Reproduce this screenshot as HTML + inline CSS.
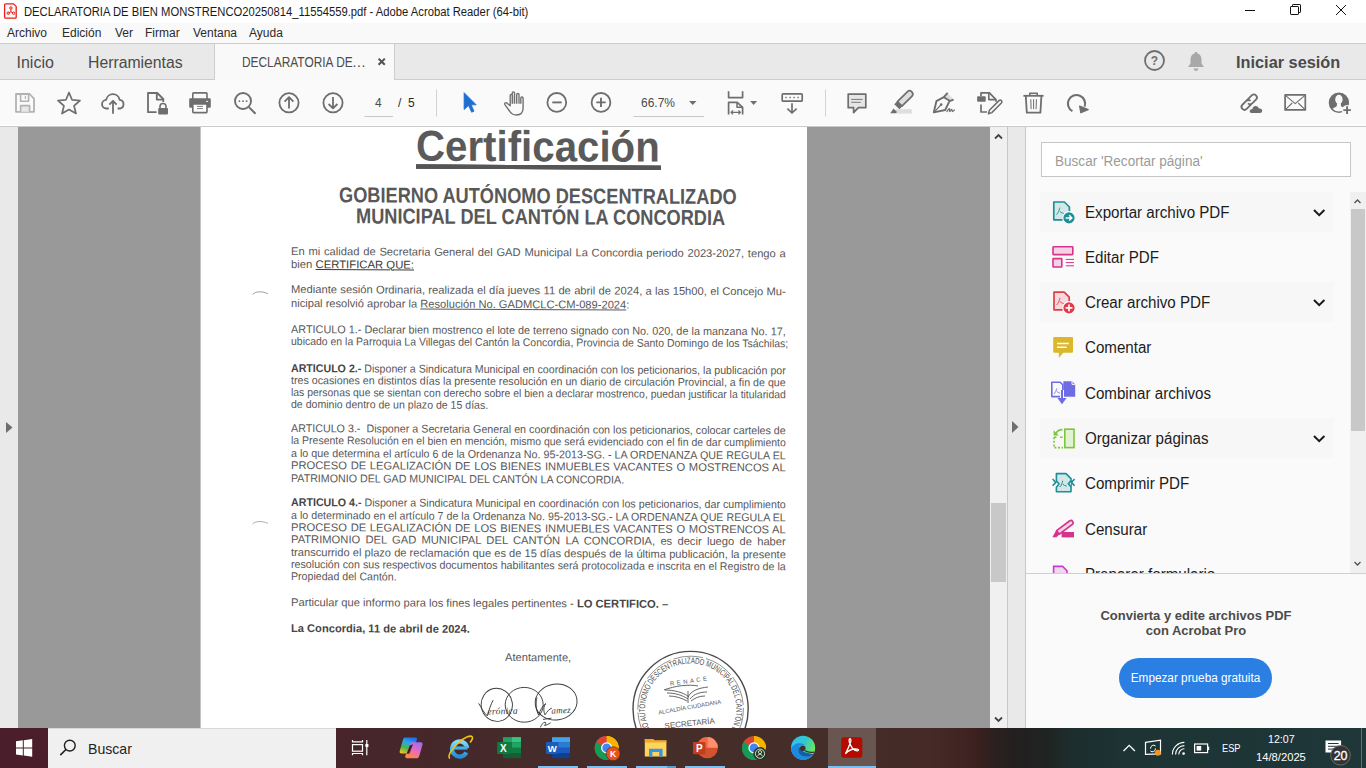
<!DOCTYPE html>
<html><head><meta charset="utf-8">
<style>
*{margin:0;padding:0;box-sizing:border-box}
html,body{width:1366px;height:768px;overflow:hidden;background:#fff;font-family:"Liberation Sans",sans-serif}
.a{position:absolute}
.t{position:absolute;white-space:nowrap}
#title{left:0;top:0;width:1366px;height:23px;background:#fff}
#menu{left:0;top:23px;width:1366px;height:21px;background:#f9f9f9;border-bottom:1px solid #cdcdcd}
#tabs{left:0;top:44px;width:1366px;height:36px;background:#e9e9e9;border-bottom:1px solid #cdcdcd}
#tb{left:0;top:80px;width:1366px;height:47px;background:#fafafa;border-bottom:1px solid #c9c9c9;box-shadow:inset 0 -1px 0 #fff}
#view{left:0;top:127px;width:1366px;height:601px;background:#999}
#taskbar{left:0;top:728px;width:1366px;height:40px;background:linear-gradient(90deg,#4a1e2a 0%,#47222a 20%,#452b2a 38%,#452e29 52%,#452d29 62%,#452a28 68%,#412422 70.5%,#3a201f 71.5%,#2c2020 72.8%,#221f1f 74.5%,#1f2422 76.5%,#1d2d2d 78.5%,#1d3334 82%,#1f3739 100%)}
.menuitem{font-size:12px;color:#2b2b2b;top:26px}
.tabtxt{font-size:16px;color:#4b4b4b}
svg{position:absolute;overflow:visible}
.doc{font-family:"Liberation Sans",sans-serif;color:#585858}
.doc b{color:#454545}
.doc .dk{color:#3a3a3a}
.doc u{text-decoration-thickness:1px;text-underline-offset:1px}
.ln{position:absolute;left:0;width:494.8px;font-size:11.2px;line-height:11.2px;height:11.2px;text-align:justify;text-align-last:justify;white-space:nowrap;transform-origin:0 0}
.ll{position:absolute;left:0;font-size:11.2px;line-height:11.2px;height:11.2px;white-space:nowrap;transform-origin:0 0}
.panelitem{position:absolute;left:1085px;font-size:16px;color:#1c1c1c;white-space:nowrap;transform:scaleX(0.945);transform-origin:0 0;margin-top:1px}
</style></head><body>
<!-- TITLE BAR -->
<div id="title" class="a"></div>
<svg style="left:3.5px;top:2.6px" width="14" height="16" viewBox="0 0 14 16"><path d="M1.6 0.8h8l2.6 2.6v10.8a1 1 0 0 1-1 1h-9.6a1 1 0 0 1-1-1v-12.4a1 1 0 0 1 1-1z" fill="#f8f8f8" stroke="#e8201a" stroke-width="1.3"/><circle cx="6.9" cy="5" r="1.2" fill="none" stroke="#e8201a" stroke-width="1"/><circle cx="4.2" cy="10.2" r="1.2" fill="none" stroke="#e8201a" stroke-width="1"/><circle cx="9.6" cy="10.2" r="1.2" fill="none" stroke="#e8201a" stroke-width="1"/><path d="M6.9 6.2v2.6l-2.2 1.2M6.9 8.8l2.2 1.2" fill="none" stroke="#e8201a" stroke-width="1"/></svg>
<div class="t" id="wtitle" style="left:23.5px;top:5px;font-size:12px;color:#1a1a1a;transform:scaleX(0.937);transform-origin:0 0">DECLARATORIA DE BIEN MONSTRENCO20250814_11554559.pdf - Adobe Acrobat Reader (64-bit)</div>
<svg style="left:0;top:0" width="1366" height="23" viewBox="0 0 1366 23"><g fill="none" stroke="#111" stroke-width="1">
<path d="M1245 10.5h10"/>
<rect x="1290.5" y="6.5" width="8" height="8" rx="0.6"/>
<path d="M1292.5 6.5v-1.4a.6 .6 0 0 1 .6-.6h6.8a.6 .6 0 0 1 .6 .6v6.8a.6 .6 0 0 1-.6 .6h-1.4"/>
<path d="M1336 5l10 10M1346 5l-10 10"/>
</g></svg>
<!-- MENU -->
<div id="menu" class="a"></div>
<div class="t menuitem" style="left:7px">Archivo</div>
<div class="t menuitem" style="left:62px">Edición</div>
<div class="t menuitem" style="left:115px">Ver</div>
<div class="t menuitem" style="left:145px">Firmar</div>
<div class="t menuitem" style="left:193px">Ventana</div>
<div class="t menuitem" style="left:249px">Ayuda</div>

<!-- TABS -->
<div id="tabs" class="a"></div>
<div class="a" style="left:214px;top:44px;width:181px;height:36px;background:#f9f9f9;border-left:1px solid #cdcdcd;border-right:1px solid #cdcdcd"></div>
<div class="t tabtxt" style="left:16.5px;top:54px">Inicio</div>
<div class="t tabtxt" style="left:87.5px;top:54px;transform:scaleX(0.985);transform-origin:0 0">Herramientas</div>
<div class="t" id="tabt" style="left:241.5px;top:54px;font-size:14px;color:#4b4b4b;transform:scaleX(0.85);transform-origin:0 0">DECLARATORIA DE</div><div class="t" style="left:352.5px;top:54px;font-size:14px;color:#4b4b4b;letter-spacing:0.6px">...</div>
<svg style="left:378px;top:58px" width="8" height="8" viewBox="0 0 8 8"><path d="M0.6 0.6L6.8 6.8M6.8 0.6L0.6 6.8" stroke="#505050" stroke-width="2"/></svg>
<!-- right of tabs -->
<svg style="left:1144px;top:50px" width="21" height="21" viewBox="0 0 21 21"><circle cx="10.5" cy="10.5" r="9.5" fill="none" stroke="#6e6e6e" stroke-width="1.8"/><text x="10.5" y="15" font-family="Liberation Sans" font-weight="bold" font-size="12" text-anchor="middle" fill="#6e6e6e">?</text></svg>
<svg style="left:1187px;top:51px" width="18" height="21" viewBox="0 0 18 21"><path d="M9 1c-1 0-1.5.7-1.5 1.5C4.8 3.3 3.5 5.5 3.5 8.5v4L1 16h16l-2.5-3.5v-4c0-3-1.3-5.2-4-6C10.5 1.700 10 1 9 1z" fill="#a8a8a8"/><path d="M6.5 17.5h5a2.5 2.5 0 0 1-5 0z" fill="#a8a8a8"/></svg>
<div class="t" style="left:1236px;top:54px;font-size:16px;font-weight:bold;color:#4b4b4b;transform:scaleX(1.02);transform-origin:0 0">Iniciar sesión</div>

<!-- TOOLBAR -->
<div id="tb" class="a"></div>
<svg style="left:0;top:0" width="1366" height="130" viewBox="0 0 1366 130">
<g fill="none" stroke="#6e6e6e" stroke-width="1.8" stroke-linejoin="round">
<!-- save (disabled) -->
<g stroke="#b2b2b2">
<path d="M16 94h13.6l4.4 4.6v13.2h-18z" stroke-width="1.8"/>
<path d="M20.6 94v7.3h8v-7.3" stroke-width="1.6"/>
<path d="M25.4 96v3" stroke-width="1.1"/>
<path d="M20.6 111.8v-6.2h9v6.2" fill="#e8e8e8" stroke-width="1.6"/>
</g>
<!-- star -->
<path d="M69 92.5L72 99.8L80 100.5L74 105.8L76 113.5L69 109.5L62 113.5L64 105.8L58 100.5L66 99.8z" stroke-width="1.7"/>
<!-- cloud upload -->
<path d="M108.8 108.5h-2.3a4.3 4.3 0 0 1-.3-8.6a6.8 6.8 0 0 1 13.4-.1a4.4 4.4 0 0 1 .3 8.7h-2.3" stroke-width="1.8"/>
<path d="M113 113.8v-13M109.4 104.6l3.6-3.8l3.6 3.8" stroke-width="1.8"/>
<!-- file lock -->
<path d="M156.6 112.2h-8.6v-19.2h9.3l6 6v3" stroke-width="1.8"/>
<path d="M156.8 93v6.6h6.6" stroke-width="1.8"/>
<path d="M160 108.5v-2a3 3 0 0 1 6 0v2" stroke-width="1.6"/>
<rect x="158.2" y="108" width="9.8" height="6.6" rx="1" fill="#6e6e6e" stroke="none"/>
<!-- printer -->
<rect x="192.8" y="92.9" width="14.2" height="7" rx="0.8" stroke-width="1.6"/>
<rect x="189.2" y="98.2" width="21.6" height="9.6" rx="1.2" fill="#6e6e6e" stroke="none"/>
<rect x="192.8" y="104" width="14.2" height="8.6" rx="0.8" fill="#fff" stroke-width="1.6"/>
<path d="M197 106.4h6M197 108.6h6" stroke-width="0.9"/>
<path d="M206 101.4h2" stroke="#fff" stroke-width="0.9"/>
<!-- zoom search -->
<circle cx="243" cy="101" r="8" stroke-width="1.9"/>
<path d="M248.9 107.1l6.6 6.6" stroke-width="2"/>
<g fill="#6e6e6e" stroke="none"><circle cx="239.4" cy="101.2" r="0.9"/><circle cx="243" cy="101.2" r="0.9"/><circle cx="246.6" cy="101.2" r="0.9"/></g>
<!-- up -->
<circle cx="289" cy="102.8" r="9.6" stroke-width="1.8"/>
<path d="M289 108.5v-11.5M284.6 101.6l4.4-4.4l4.4 4.4" stroke-width="1.8"/>
<!-- down -->
<circle cx="333" cy="102.8" r="9.6" stroke-width="1.8"/>
<path d="M333 97v11.5M328.6 104l4.4 4.4l4.4-4.4" stroke-width="1.8"/>
<!-- page input underline -->
<path d="M364.7 116.5h28.3" stroke="#c8c8c8" stroke-width="1"/>
<!-- separator -->
<path d="M436.5 89.5v27" stroke="#d2d2d2" stroke-width="1"/>
<!-- hand -->
<path d="M520.8 103.8V98.2a1.15 1.15 0 0 1 2.3 0V107.8c0 4.6-2.8 7.2-6.8 7.2c-3.2 0-5.2-1.4-6.8-4l-4.6-6.4c-.8-1.2.6-2.6 1.9-1.7l3.4 2.8V95.6a1.15 1.15 0 0 1 2.3 0V103.8M512.25 103.8V93a1.15 1.15 0 0 1 2.3 0V103.8M516.7 103.8V94.6a1.15 1.15 0 0 1 2.3 0V103.8" stroke-width="1.35"/>
<!-- zoom out -->
<circle cx="556.8" cy="102.4" r="9.4" stroke-width="1.8"/>
<path d="M552.3 102.4h9.4" stroke-width="1.9"/>
<!-- zoom in -->
<circle cx="601" cy="102.4" r="9.4" stroke-width="1.8"/>
<path d="M596.3 102.4h9.4M601 97.7v9.4" stroke-width="1.9"/>
<!-- zoom underline -->
<path d="M633.5 116.5h70.5" stroke="#c8c8c8" stroke-width="1"/>
<path d="M689 101h7.5l-3.75 4z" fill="#6e6e6e" stroke="none"/>
<!-- fit page -->
<path d="M728.6 91.2v6.4h14v-6.4" stroke-width="1.7"/>
<path d="M728.6 114.6v-12.2h8.6l5.4 5v7.2" stroke-width="1.7"/>
<path d="M737 102.6v4.6h5.4" stroke-width="1.5"/>
<path d="M731 112.4h9.4M733 110.4l-2 2l2 2M738.4 110.4l2 2l-2 2" stroke-width="1.3"/>
<path d="M750.1 101h7l-3.5 4z" fill="#6e6e6e" stroke="none"/>
<!-- measure -->
<rect x="782.2" y="93.8" width="20" height="7.4" rx="1" stroke-width="1.7"/>
<g fill="#6e6e6e" stroke="none"><rect x="785.3" y="96.8" width="1.4" height="1.4"/><rect x="789.4" y="96.8" width="1.4" height="1.4"/><rect x="793.4" y="96.8" width="1.4" height="1.4"/><rect x="797.4" y="96.8" width="1.4" height="1.4"/></g>
<path d="M792 103.3v9.6M787.4 108.6l4.6 4.4l4.6-4.4" stroke-width="1.7"/>
<!-- separator -->
<path d="M825.5 89.5v27" stroke="#d2d2d2" stroke-width="1"/>
<!-- comment -->
<path d="M848.2 94.1h17.6v13.6h-7.4l-4.8 5v-5h-5.4z" fill="#e6e6e6" stroke-width="1.7"/>
<path d="M851.2 99.4h11.5M851.2 102.3h9.6" stroke-width="0.9"/>
<!-- highlighter -->
<rect x="896" y="109.2" width="15.8" height="4.4" fill="#dedede" stroke="none"/>
<g transform="translate(902.2 101.4) rotate(-45)">
<path d="M-3.6 -3.2H10.4a3.2 3.2 0 0 1 0 6.4H-3.6z" fill="#dedede" stroke-width="1.7"/>
<rect x="-7.6" y="-3.6" width="4.6" height="7.2" fill="#6e6e6e" stroke="none"/>
</g>
<path d="M890.2 113.2l3.4-4.6l3.4 3.4l-1.2 1.2z" fill="#6e6e6e" stroke="none"/>
<!-- pen sign -->
<path d="M947.4 93l6.2 6.4l-4 1.6l-5.8-3.8z" fill="#dedede" stroke="none"/>
<path d="M947.6 92.8l-3.8 4.4M953.6 99.6l-4.2 1.6" stroke-width="1.9"/>
<path d="M943.8 97.2l-7.4 4l-2.6 11.2l11.4-2.4l4.4-9.2z" stroke-width="1.9"/>
<path d="M934.4 111.8l6.4-6.8" stroke-width="1.1"/>
<circle cx="941.2" cy="104.6" r="1.3" fill="#6e6e6e" stroke="none"/>
<path d="M946.6 112c1.2-1.8 2.2-3.4 2.8-3.4c.6 0-.4 3 .4 3c.6 0 1.2-2.2 1.9-2.2c.6 0 .2 2.2.8 2.2c.5 0 1.4-1.2 2.2-1.8" stroke-width="1.2"/>
<!-- edit doc -->
<path d="M981 96v-3.2h8.4l6.6 6.8v2.2" stroke-width="1.7"/>
<path d="M988.8 92.8v6.8h7.2" stroke-width="1.6"/>
<path d="M981 104.4v7.6h6" stroke-width="1.7"/>
<rect x="977.1" y="96.2" width="8.6" height="5.6" rx="1" fill="#6e6e6e" stroke="none"/>
<path d="M988.4 113.8l1-3.6l9.6-9.6a1.6 1.6 0 0 1 2.4 2.4l-9.6 9.6z" stroke-width="1.5"/>
<!-- trash -->
<path d="M1023.4 95.8h20.2" stroke-width="1.8"/>
<path d="M1029.8 95.4v-2.2h7.4v2.2" stroke-width="1.6"/>
<path d="M1025.8 96l1 16.6h13.6l1-16.6" stroke-width="1.8"/>
<path d="M1030.8 99.2l.3 10M1033.6 99.2v10M1036.4 99.2l-.3 10" stroke-width="1"/>
<!-- rotate -->
<path d="M1072.4 111.2a8.6 8.6 0 1 1 12.2-4.6" stroke-width="2.1"/>
<path d="M1079.6 106l8.6 3.6l-7.4 3.2z" fill="#6e6e6e" stroke="#6e6e6e" stroke-width="1.2"/>
<!-- link cloud -->
<g transform="translate(1249.2 102.2) rotate(-45)">
<path d="M-0.2 -3H6.6A3 3 0 0 1 6.6 3H1.2A3 3 0 0 1 -1.8 0" stroke-width="1.8" stroke-linecap="butt"/>
<path d="M0.2 3H-6.6A3 3 0 0 1 -6.6 -3H-1.2A3 3 0 0 1 1.8 0" stroke-width="1.8" stroke-linecap="butt"/>
</g>
<path d="M1251.4 113.8a2.6 2.6 0 0 1 .3-5.2a4 4 0 0 1 7.6-.8a3 3 0 0 1 3.6 3a3 3 0 0 1-3 3z" fill="#6e6e6e" stroke="#f9f9f9" stroke-width="1.4"/>
<!-- mail -->
<rect x="1285.1" y="94.9" width="20.2" height="15" stroke-width="1.7"/>
<path d="M1285.4 95.4l9.8 8.2l9.8-8.2M1285.4 109.6l6.8-6.6M1305 109.6l-6.8-6.6" stroke-width="1.1"/>
<!-- person add -->
<circle cx="1338.9" cy="102.8" r="10.2" fill="#6e6e6e" stroke="none"/>
<ellipse cx="1338.9" cy="99.5" rx="3.7" ry="4.7" fill="#f9f9f9" stroke="none"/>
<path d="M1336.9 103.4v1.8c0 .8-.5 1.4-1.4 1.8l-3 1.7A8.7 8.7 0 0 0 1345.3 108.7l-3-1.7c-.9-.4-1.4-1-1.4-1.8v-2z" fill="#f9f9f9" stroke="none"/>
<circle cx="1347.1" cy="110.1" r="5.2" fill="#f9f9f9" stroke="none"/>
<path d="M1347.1 106.3v7.6M1343.3 110.1h7.6" stroke="#6e6e6e" stroke-width="1.9"/>
</g>
</svg>


<div class="t" style="left:375px;top:96px;font-size:12px;color:#4b4b4b">4</div>
<div class="t" style="left:398px;top:96px;font-size:12px;color:#2b2b2b">/&nbsp; 5</div>
<div class="t" style="left:641px;top:96px;font-size:12px;color:#4b4b4b">66.7%</div>
<svg style="left:0;top:0" width="500" height="130"><path d="M464.1 92.7L464.1 109.5L468.6 105.6L471.6 112.2L474 111.2L471.2 104.8L476.2 104.8z" fill="#1d6fd2" stroke="#1d6fd2" stroke-width="0.8" stroke-linejoin="round"/></svg>
<!-- VIEW -->
<div id="view" class="a"></div>
<div class="a" style="left:0;top:127px;width:18px;height:601px;background:#e9e9e9"></div>
<svg style="left:6px;top:422px" width="7" height="11" viewBox="0 0 7 11"><path d="M0 0L6.5 5.5L0 11z" fill="#6e6e6e"/></svg>
<!-- page -->
<div class="a" id="page" style="left:200px;top:127px;width:607px;height:601px;background:#fff;overflow:hidden;border-left:1px solid #c4c4c4">
<svg style="left:-1px;top:-127px" width="607" height="860" viewBox="200 0 607 860">
<g fill="none" stroke="#555" stroke-width="0.9">
<path d="M252.5 294.5c3-3.2 9-3.6 15.5-.8" stroke="#888" stroke-width="0.8"/>
<path d="M252.5 524c3-3 9-3.4 15.5-.6" stroke="#999" stroke-width="0.8"/>
</g>
<g fill="none" stroke="#3a3a3a" stroke-width="0.95">
<ellipse cx="496.8" cy="704.8" rx="15.6" ry="16.6" transform="rotate(-10 496.8 704.8)"/>
<ellipse cx="524.2" cy="704.8" rx="19" ry="17.4"/>
<ellipse cx="556.1" cy="702" rx="21" ry="18" transform="rotate(-8 556.1 702)"/>
<path d="M478.7 703.4c2.2 3.6 5 9.4 8.6 12.4c1.6-5 3.4-11.4 5.8-15.6"/>
<path d="M537 697.6c-1.6 5-1 12.6 1.6 17.4c1.6-4.6 3.6-9.4 7.4-11.4c-3 2-2.4 8.8-1 11.2c2-3.2 4.4-6 6.8-6.6"/>
<path d="M540.4 727.4c1-2.6 2.6-5 4.6-5.2c1.6 0 .6 2.4-.6 3.2c2 0 4.2-1.4 6.2-2.6M543 719.4l8.4-1.2"/>
</g>
<text x="487.5" y="714.6" font-family="Liberation Serif" font-style="italic" font-size="9.5" fill="#3a3a3a" letter-spacing="0.2" transform="rotate(-2 487.5 714.6)">erónica</text>
<text x="551.5" y="713.8" font-family="Liberation Serif" font-style="italic" font-size="9" fill="#3a3a3a" letter-spacing="0.3" transform="rotate(-3 551.5 713.8)">amez</text>
<defs>
<path id="sr1" d="M690.6 765.5a47.5 47.5 0 1 1 0.01 0"/><path id="sr0" d="M690.6 754.6a45.6 45.6 0 1 1 0.01 0"/>
</defs>
<g fill="none" stroke="#4a4a4a">
<circle cx="690.6" cy="709" r="57.6" stroke-width="1.4"/>
<circle cx="690.6" cy="709" r="52.8" stroke-width="0.6" stroke-dasharray="30 3"/>
</g>
<text font-family="Liberation Sans" font-size="8.4" fill="#4a4a4a"><textPath href="#sr0" startOffset="9%" textLength="252" lengthAdjust="spacingAndGlyphs">GOBIERNO AUTÓNOMO DESCENTRALIZADO MUNICIPAL DEL CANTÓN LA CONCORDIA</textPath></text>
<text x="690" y="683" font-family="Liberation Sans" font-size="6" fill="#555" text-anchor="middle" letter-spacing="2.5" transform="rotate(-8 690 683)">RENACE</text>
<g fill="none" stroke="#555" stroke-width="0.9">
<path d="M664 690c10-4 25-6 34-4"/>
<path d="M665 690c8 0 18 2 24 7M667 693c8 0 15 2 21 6M669 696c6 0 13 2 18 5M688 697c3-6 10-9 20-10M690 699c4-5 10-7 17-7M691 701c4-3 8-5 14-5M688 703v-12"/>
</g>
<text x="690" y="709" font-family="Liberation Sans" font-size="5.8" fill="#555" text-anchor="middle" transform="rotate(-10 690 709)">ALCALDÍA CIUDADANA</text>
<text x="690" y="726" font-family="Liberation Sans" font-size="8" fill="#555" text-anchor="middle" transform="rotate(-6 690 726)">SECRETARÍA</text>
</svg>
<div class="a doc" id="doc" style="left:90.2px;top:-127px;width:600px;height:800px;transform:skewY(0.27deg);transform-origin:0 255px">
<div class="ln" style="top:246.12px">En mi calidad de Secretaria General del GAD Municipal La Concordia periodo 2023-2027, tengo a</div>
<div class="ll" style="top:258.62px;transform:scaleX(1.0110)">bien <u class="dk">CERTIFICAR QUE:</u></div>
<div class="ln" style="top:284.42px">Mediante sesión Ordinaria, realizada el día jueves 11 de abril de 2024, a las 15h00, el Concejo Mu-</div>
<div class="ll" style="top:297.62px;transform:scaleX(0.9946)">nicipal resolvió aprobar la <u>Resolución No. GADMCLC-CM-089-2024</u>:</div>
<div class="ln" style="top:323.62px;width:509.6px;transform:scaleX(0.9709)">ARTICULO 1.- Declarar bien mostrenco el lote de terreno signado con No. 020, de la manzana No. 17,</div>
<div class="ll" style="top:336.42px;transform:scaleX(0.9347)">ubicado en la Parroquia La Villegas del Cantón la Concordia, Provincia de Santo Domingo de los Tsáchilas;</div>
<div class="ln" style="top:362.52px;width:521.0px;transform:scaleX(0.9497)"><b>ARTICULO 2.-</b> Disponer a Sindicatura Municipal en coordinación con los peticionarios, la publicación por</div>
<div class="ln" style="top:375.02px;width:518.5px;transform:scaleX(0.9542)">tres ocasiones en distintos días la presente resolución en un diario de circulación Provincial, a fin de que</div>
<div class="ln" style="top:387.32px;width:531.0px;transform:scaleX(0.9319)">las personas que se sientan con derecho sobre el bien a declarar mostrenco, puedan justificar la titularidad</div>
<div class="ll" style="top:398.72px;transform:scaleX(0.9435)">de dominio dentro de un plazo de 15 días.</div>
<div class="ln" style="top:423.22px;width:517.0px;transform:scaleX(0.9570)">ARTICULO 3.-&nbsp; Disponer a Secretaria General en coordinación con los peticionarios, colocar carteles de</div>
<div class="ln" style="top:435.42px;width:528.5px;transform:scaleX(0.9363)">la Presente Resolución en el bien en mención, mismo que será evidenciado con el fin de dar cumplimiento</div>
<div class="ln" style="top:447.62px;width:516.0px;transform:scaleX(0.9589)">a lo que determina el artículo 6 de la Ordenanza No. 95-2013-SG. - LA ORDENANZA QUE REGULA EL</div>
<div class="ln" style="top:460.12px">PROCESO DE LEGALIZACIÓN DE LOS BIENES INMUEBLES VACANTES O MOSTRENCOS AL</div>
<div class="ll" style="top:472.62px;transform:scaleX(0.9535)">PATRIMONIO DEL GAD MUNICIPAL DEL CANTÓN LA CONCORDIA.</div>
<div class="ln" style="top:497.32px;width:519.1px;transform:scaleX(0.9532)"><b>ARTICULO 4.-</b> Disponer a Sindicatura Municipal en coordinación con los peticionarios, dar cumplimiento</div>
<div class="ln" style="top:509.62px;width:519.1px;transform:scaleX(0.9531)">a lo determinado en el artículo 7 de la Ordenanza No. 95-2013-SG.- LA ORDENANZA QUE REGULA EL</div>
<div class="ln" style="top:522.32px">PROCESO DE LEGALIZACIÓN DE LOS BIENES INMUEBLES VACANTES O MOSTRENCOS AL</div>
<div class="ln" style="top:534.12px">PATRIMONIO DEL GAD MUNICIPAL DEL CANTÓN LA CONCORDIA, es decir luego de haber</div>
<div class="ln" style="top:546.52px;width:498.7px;transform:scaleX(0.9923)">transcurrido el plazo de reclamación que es de 15 días después de la última publicación, la presente</div>
<div class="ln" style="top:558.72px;width:518.5px;transform:scaleX(0.9543)">resolución con sus respectivos documentos habilitantes será protocolizada e inscrita en el Registro de la</div>
<div class="ll" style="top:570.52px;transform:scaleX(0.9484)">Propiedad del Cantón.</div>
<div class="ll" style="top:596.82px;transform:scaleX(0.9994)">Particular que informo para los fines legales pertinentes - <b>LO CERTIFICO. –</b></div>
<div class="ll" style="top:623.02px;transform:scaleX(0.9950)"><b>La Concordia, 11 de abril de 2024.</b></div>
<div class="ll" style="top:124.20px;left:125.4px;font-size:43px;line-height:43px;height:43px;font-weight:bold;color:#5a5a5a;transform:scaleX(0.9360)">Certificación</div>
<div class="ll" style="top:184.58px;left:48.1px;font-size:21.4px;line-height:21.4px;height:21.4px;font-weight:bold;color:#585858;transform:scaleX(0.8508)">GOBIERNO AUTÓNOMO DESCENTRALIZADO</div>
<div class="ll" style="top:206.18px;left:64.8px;font-size:21.4px;line-height:21.4px;height:21.4px;font-weight:bold;color:#585858;transform:scaleX(0.8504)">MUNICIPAL DEL CANTÓN LA CONCORDIA</div>
<div class="ll" style="top:650.82px;left:213.9px;font-size:11.2px;line-height:11.2px;height:11.2px;;transform:scaleX(0.9948)">Atentamente,</div>
<div class="a" style="left:124.8px;top:164.2px;width:245px;height:4px;background:#5a5a5a"></div>

<div class="a" style="left:124.8px;top:164.2px;width:245px;height:4px;background:#5a5a5a"></div>

<div class="a" style="left:124.8px;top:164.2px;width:245px;height:3.8px;background:#555"></div>

<div class="a" style="left:124.8px;top:164.2px;width:245px;height:3.8px;background:#555"></div>

</div>
</div>
<!-- scrollbar -->
<div class="a" style="left:990px;top:127px;width:18px;height:601px;background:#f0f0f0;border-right:1px solid #c8c8c8"></div>
<div class="a" style="left:991px;top:503px;width:15px;height:79px;background:#c8c8c8"></div>
<div class="a" style="left:1008px;top:127px;width:18px;height:601px;background:#e9e9e9;border-right:1px solid #c8c8c8"></div>
<svg style="left:1012px;top:421px" width="7" height="12" viewBox="0 0 7 12"><path d="M0 0L6.5 6L0 12z" fill="#6e6e6e"/></svg>
<!-- right panel -->
<div class="a" id="rpanel" style="left:1026px;top:127px;width:340px;height:601px;background:#fafafa"></div>
<div class="a" style="left:1041px;top:142px;width:310px;height:35px;background:#fff;border:1px solid #c6c6c6"></div>
<div class="t" id="srch" style="left:1055px;top:153px;font-size:14px;color:#9b9b9b;transform:scaleX(0.968);transform-origin:0 0">Buscar 'Recortar página'</div>
<div class="a" style="left:1040px;top:192px;width:294px;height:40px;background:#f7f7f7"></div>
<div class="a" style="left:1040px;top:282px;width:294px;height:40px;background:#f7f7f7"></div>
<div class="a" style="left:1040px;top:418px;width:294px;height:40px;background:#f7f7f7"></div>
<div class="a" style="left:1026px;top:192px;width:340px;height:381px;overflow:hidden">
<div class="panelitem" style="left:59px;top:11px">Exportar archivo PDF</div>
<div class="panelitem" style="left:59px;top:56px">Editar PDF</div>
<div class="panelitem" style="left:59px;top:101px">Crear archivo PDF</div>
<div class="panelitem" style="left:59px;top:146px">Comentar</div>
<div class="panelitem" style="left:59px;top:192px">Combinar archivos</div>
<div class="panelitem" style="left:59px;top:237px">Organizar páginas</div>
<div class="panelitem" style="left:59px;top:282px">Comprimir PDF</div>
<div class="panelitem" style="left:59px;top:328px">Censurar</div>
<div class="panelitem" style="left:59px;top:373px">Preparar formulario</div>
</div>
<div class="a" style="left:1350px;top:192px;width:16px;height:381px;background:#f0f0f0"></div>
<div class="a" style="left:1351px;top:209px;width:14px;height:222px;background:#c8c8c8"></div>
<svg style="left:0;top:0" width="1366" height="768" viewBox="0 0 1366 768">
<g fill="none" stroke="#505050" stroke-width="1.3">
<path d="M1354.5 203l3-3l3 3"/>
<path d="M1354.5 562l3 3l3-3"/>
<path d="M995 138.5l3.5-3.5l3.5 3.5" stroke-width="1.8" stroke="#444"/>
<path d="M995 717.5l3.5 3.5l3.5-3.5" stroke-width="1.8" stroke="#444"/>
</g>
<g fill="none" stroke="#1a1a1a" stroke-width="2">
<path d="M1314 210l5.2 5.2l5.2-5.2"/>
<path d="M1314 300l5.2 5.2l5.2-5.2"/>
<path d="M1314 436l5.2 5.2l5.2-5.2"/>
</g>
<!-- export icon -->
<path d="M1053.8 202h10.6l5 5v12.8h-15.6z" fill="#d2e7e8" stroke="#1d8f95" stroke-width="1.7" stroke-linejoin="round"/>
<path d="M1056.4 214.8c1.6-1.6 3-4.6 3.4-7.2M1059.8 211.4c1.4 1.2 3 2 4.6 2.2" fill="none" stroke="#1d8f95" stroke-width="0.9"/>
<circle cx="1069" cy="217.9" r="6.2" fill="#1d8f95" stroke="#fafafa" stroke-width="1.2"/>
<path d="M1065.6 217.9h6M1069.2 215.3l2.6 2.6l-2.6 2.6" fill="none" stroke="#fff" stroke-width="1.5"/>
<!-- edit icon -->
<rect x="1053" y="246.8" width="19.8" height="7.8" fill="#f4d3e6" stroke="#d6338a" stroke-width="1.6" rx="0.6"/>
<rect x="1053" y="258.6" width="8.8" height="8.4" fill="#f4d3e6" stroke="#d6338a" stroke-width="1.6" rx="0.6"/>
<path d="M1065.8 259.4h8.2M1065.8 262.6h8.2M1065.8 265.8h8.2" stroke="#d6338a" stroke-width="1"/>
<!-- crear icon -->
<path d="M1054 292.2h10.2l5 5v12.6h-15.2z" fill="#f7d9dc" stroke="#e03c48" stroke-width="1.7" stroke-linejoin="round"/>
<path d="M1056.6 305c1.6-1.6 3-4.6 3.4-7.2M1060 301.6c1.4 1.2 3 2 4.6 2.2" fill="none" stroke="#e03c48" stroke-width="0.9"/>
<circle cx="1069" cy="307.9" r="6.2" fill="#e03c48" stroke="#fafafa" stroke-width="1.2"/>
<path d="M1065.6 307.9h6.8M1069 304.5v6.8" fill="none" stroke="#fff" stroke-width="1.7"/>
<!-- comentar icon -->
<path d="M1054.4 337.1h17.4a1.2 1.2 0 0 1 1.2 1.2v13.2a1.2 1.2 0 0 1-1.2 1.2h-8.6l-4.4 5.2v-5.2h-4.4a1.2 1.2 0 0 1-1.2-1.2v-13.2a1.2 1.2 0 0 1 1.2-1.2z" fill="#dcb62b"/>
<path d="M1057 343.4h11.8M1057 347.3h9.6" stroke="#fff" stroke-width="1.5"/>
<!-- combinar icon -->
<path d="M1072 381.2h-8.6v15.6h11.8v-12.4z" fill="#6d6ce6"/>
<path d="M1072 381.2v3.2h3.2" fill="none" stroke="#fafafa" stroke-width="1"/>
<path d="M1051.8 382.2h8.4l2.6 2.6v11.8h-11z" fill="#fafafa" stroke="#6d6ce6" stroke-width="1.6" stroke-linejoin="round"/>
<path d="M1054 394c1.2-1.2 2.4-3.6 2.7-5.6M1056.7 391.4c1 .9 2.2 1.5 3.4 1.7" fill="none" stroke="#6d6ce6" stroke-width="0.8"/>
<path d="M1062 390v8.5" stroke="#fafafa" stroke-width="4"/>
<path d="M1062 390v8" stroke="#6d6ce6" stroke-width="2"/>
<path d="M1057.4 398h9.2l-4.6 6.2z" fill="#6d6ce6"/>
<!-- organizar icon -->
<rect x="1064.8" y="429.2" width="9.2" height="18.4" fill="#e2f2d2" stroke="#7cc63b" stroke-width="1.6"/>
<path d="M1054 437.2v10.4h9" fill="none" stroke="#7cc63b" stroke-width="1.6" stroke-dasharray="2 1.6"/>
<path d="M1054 437.2h2.4M1060 437.2h2.6" stroke="#7cc63b" stroke-width="1.6"/>
<path d="M1062.4 429.6c-3 0-5.6 1.6-6.8 4.4" fill="none" stroke="#7cc63b" stroke-width="1.6"/>
<path d="M1053.6 430.2v5.4h5.4z" fill="#7cc63b"/>
<!-- comprimir icon -->
<path d="M1056.4 473.6h9.6l5 5v13.2h-14.6v-4.6l2.6-3.2l-2.6-3.2z" fill="#d2e7e8" stroke="#1d8f95" stroke-width="1.6" stroke-linejoin="round"/>
<path d="M1071 486.6l-2.6-2.8l2.6-3.2" fill="#d2e7e8" stroke="#1d8f95" stroke-width="1.6"/>
<path d="M1052.6 479l3.2 3.4l-3.2 3.4M1074.6 479l-3.2 3.4l3.2 3.4" fill="none" stroke="#1d8f95" stroke-width="1.6"/>
<path d="M1059.8 487c1.4-1.4 2.6-4 2.9-6.2M1062.7 484.2c1.2 1 2.6 1.7 4 1.9" fill="none" stroke="#1d8f95" stroke-width="1"/>
<!-- censurar icon -->
<rect x="1061.6" y="532" width="12.4" height="5.4" fill="#d6338a"/>
<path d="M1056.6 530.6l13.2-9.8a1.8 1.8 0 0 1 2.6.4l.4.6a1.8 1.8 0 0 1-.4 2.6l-13.2 9.8z" fill="#f4d3e6" stroke="#d6338a" stroke-width="1.7" stroke-linejoin="round"/>
<path d="M1056.2 530.2l3.2 4.4l-3 2.6h-4z" fill="#d6338a"/>
<!-- next icon partial -->
<clipPath id="cp1"><rect x="1040" y="560" width="60" height="13"/></clipPath><path clip-path="url(#cp1)" d="M1053.6 566.4h9l4.4 4.4v8h-13.4z" fill="#f0d6f0" stroke="#c43fc4" stroke-width="1.6"/>
</svg>
<div class="a" style="left:1026px;top:573px;width:340px;height:1px;background:#d0d0d0"></div>
<div class="t" style="left:1026px;width:340px;top:609px;font-size:12.4px;font-weight:bold;color:#4b4b4b;text-align:center;line-height:14.8px;transform:scaleX(1.047);transform-origin:170px 0">Convierta y edite archivos PDF<br>con Acrobat Pro</div>
<div class="a" style="left:1119px;top:658px;width:153px;height:40px;border-radius:20px;background:#2b7fe2"></div>
<div class="t" style="left:1119px;width:153px;top:671px;font-size:12px;color:#fff;text-align:center;transform:scaleX(0.98);transform-origin:76px 0">Empezar prueba gratuita</div>

<!-- TASKBAR -->
<div id="taskbar" class="a"></div>
<div class="a" style="left:48px;top:728px;width:288px;height:40px;background:#f0f0f0;border-top:1px solid #d8d8d8"></div>
<div class="t" style="left:88px;top:740px;font-size:15px;color:#1f1f1f;transform:scaleX(0.94);transform-origin:0 0">Buscar</div>
<div class="a" style="left:828px;top:728px;width:48px;height:40px;background:#6a5650"></div>
<div class="a" style="left:538px;top:766px;width:40px;height:2px;background:#7cc0f3"></div>
<div class="a" style="left:587px;top:766px;width:40px;height:2px;background:#7cc0f3"></div>
<div class="a" style="left:636px;top:766px;width:31px;height:2px;background:#7cc0f3"></div>
<div class="a" style="left:667px;top:766px;width:9px;height:2px;background:#5a9ccc"></div>
<div class="a" style="left:685px;top:766px;width:40px;height:2px;background:#7cc0f3"></div>
<div class="a" style="left:828px;top:766px;width:48px;height:2px;background:#7cc0f3"></div>
<svg style="left:0;top:0" width="1366" height="768" viewBox="0 0 1366 768">
<defs>
<linearGradient id="cop1" x1="0.6" y1="0" x2="0.2" y2="1"><stop offset="0" stop-color="#1f6ff0"/><stop offset="0.3" stop-color="#2fa4e8"/><stop offset="0.65" stop-color="#48b845"/><stop offset="1" stop-color="#f5c22e"/></linearGradient>
<linearGradient id="cop2" x1="0.8" y1="0" x2="0.3" y2="1"><stop offset="0" stop-color="#9d6cf2"/><stop offset="0.5" stop-color="#e66bc0"/><stop offset="1" stop-color="#ff8a3e"/></linearGradient>
<linearGradient id="ie" x1="0" y1="0" x2="0" y2="1"><stop offset="0" stop-color="#7fdcff"/><stop offset="1" stop-color="#1e8fd8"/></linearGradient>
<linearGradient id="edge1" x1="0.1" y1="0.2" x2="0.95" y2="0.6"><stop offset="0" stop-color="#2ec0f2"/><stop offset="0.5" stop-color="#33c8c8"/><stop offset="1" stop-color="#6be85a"/></linearGradient>
<linearGradient id="edge2" x1="0" y1="0" x2="0" y2="1"><stop offset="0" stop-color="#1c8ad8"/><stop offset="1" stop-color="#1460b8"/></linearGradient>
</defs>
<!-- windows logo -->
<g fill="#fff">
<path d="M16 741.2l6.8-.9v7.1h-6.8z"/><path d="M23.8 740.2l8.4-1.1v8.3h-8.4z"/>
<path d="M16 748.4h6.8v7.1l-6.8-.9z"/><path d="M23.8 748.4h8.4v8.3l-8.4-1.1z"/>
</g>
<!-- search glass -->
<circle cx="69.8" cy="745.6" r="5.4" fill="none" stroke="#1f1f1f" stroke-width="1.4"/>
<path d="M65.9 749.5l-5.6 5.6" stroke="#1f1f1f" stroke-width="1.6"/>
<!-- task view -->
<g fill="none" stroke="#fff" stroke-width="1.2">
<path d="M352.5 740v1.8h10v-1.8M352.5 755.3v-1.8h10v1.8"/>
<rect x="352.5" y="744.6" width="10" height="6.6"/>
<path d="M366.8 740v15.3"/>
</g>
<rect x="365.4" y="744" width="3" height="3" fill="#fff"/>
<!-- copilot -->
<path d="M404.6 737.6h10.6c1.6 0 2.2 1.2 1.6 2.6l-4.8 11.6c-.6 1.4-1.6 1.8-3 1.8h-7.4c-1.6 0-2.4-1.2-1.8-2.8l3-10.6c.4-1.6 1.4-2.6 1.8-2.6z" fill="url(#cop1)"/>
<path d="M417.6 758.2h-10.6c-1.6 0-2.2-1.2-1.6-2.6l4.8-11.6c.6-1.4 1.6-1.8 3-1.8h7.4c1.6 0 2.4 1.2 1.8 2.8l-3 10.6c-.4 1.6-1.4 2.6-1.8 2.6z" fill="url(#cop2)"/>
<path d="M409.8 745.4l3.2-1.2l-3.6 9.4l-2.8 0.2z" fill="#3a1e22"/>
<!-- IE -->
<path d="M466.4 752.6a7.6 7.6 0 1 1 .8-4.6" fill="none" stroke="url(#ie)" stroke-width="4.2"/>
<rect x="453" y="746.4" width="14.6" height="3.2" fill="#3fb0ec"/>
<path d="M449.8 758.6c-2.4-2.4 1.2-9 8-15.2c7-6.4 13.6-9 14.6-6.2c.4 1.2-.6 3.2-2.4 5.4" fill="none" stroke="#f2c211" stroke-width="1.6"/>
<!-- excel -->
<rect x="503" y="737.2" width="18" height="21.1" rx="1" fill="#185c37"/>
<rect x="503" y="737.2" width="18" height="5.3" fill="#21a366"/>
<rect x="512" y="737.2" width="9" height="5.3" fill="#33c481"/>
<rect x="503" y="742.5" width="18" height="5.3" fill="#107c41"/>
<rect x="512" y="742.5" width="9" height="5.3" fill="#21a366"/>
<rect x="503" y="747.8" width="18" height="5.3" fill="#107c41"/>
<rect x="497.1" y="742.1" width="12.4" height="11.9" rx="1" fill="#0e7a3e"/>
<text x="503.3" y="752" font-family="Liberation Sans" font-weight="bold" font-size="10" fill="#fff" text-anchor="middle">X</text>
<!-- word -->
<rect x="552" y="737.2" width="18" height="21.1" rx="1" fill="#103f91"/>
<rect x="552" y="737.2" width="18" height="5.3" fill="#41a5ee"/>
<rect x="552" y="742.5" width="18" height="5.3" fill="#2b7cd3"/>
<rect x="552" y="747.8" width="18" height="5.3" fill="#185abd"/>
<rect x="546" y="742.1" width="12.5" height="11.9" rx="1" fill="#1a5cbf"/>
<text x="552.2" y="752" font-family="Liberation Sans" font-weight="bold" font-size="9.6" fill="#fff" text-anchor="middle">W</text>
<!-- chrome K -->
<g transform="translate(606.7 747.9)">
<circle r="12" fill="#db4437"/>
<path d="M0 0L-10.4 -6A12 12 0 0 0 -6 10.4z" fill="#0f9d58"/>
<path d="M0 0L-6 10.4A12 12 0 0 0 12 0z" fill="#0f9d58"/>
<path d="M0 0L12 0A12 12 0 0 0 0 -12z" fill="#f4b400"/>
<path d="M0 0L0 -12A12 12 0 0 0 -10.4 -6z" fill="#db4437"/>
<path d="M0 -5.5h10.8A12 12 0 0 1 12 0l-5.5 9.7zM0 -5.5h10.5A12 12 0 0 0 0 -12z" fill="#f4b400"/>
<circle r="5.6" fill="#fff"/><circle r="4.4" fill="#4285f4"/>
</g>
<circle cx="613.1" cy="753.7" r="7" fill="#e9521c" stroke="#43291f" stroke-width="0.6"/>
<text x="613.1" y="757.2" font-family="Liberation Sans" font-weight="bold" font-size="8.6" fill="#fff" text-anchor="middle">K</text>
<!-- explorer -->
<path d="M644.8 739h8.2l1.6 1.6h11.8v15.8h-21.6z" fill="#ffd45a"/>
<path d="M644.8 739h8.2l1.6 1.6h11.8v2h-21.6z" fill="#f0a82a"/>
<path d="M649 756.4v-7.6h13.6v7.6h-3.4v-4.4h-6.8v4.4z" fill="#3a96e4"/>
<!-- powerpoint -->
<circle cx="707.3" cy="747.7" r="10.6" fill="#d35230"/>
<path d="M707.3 737.1a10.6 10.6 0 0 1 10.6 10.6h-10.6z" fill="#ff8f6b"/>
<path d="M707.3 737.1a10.6 10.6 0 0 0 -10.6 10.6h10.6z" fill="#ed6c47"/>
<rect x="693" y="742" width="12.4" height="12.2" rx="1" fill="#c43e1c"/>
<text x="699.3" y="752" font-family="Liberation Sans" font-weight="bold" font-size="10" fill="#fff" text-anchor="middle">P</text>
<!-- chrome 2 -->
<g transform="translate(754 747.9)">
<circle r="12" fill="#db4437"/>
<path d="M0 0L-10.4 -6A12 12 0 0 0 -6 10.4z" fill="#0f9d58"/>
<path d="M0 0L-6 10.4A12 12 0 0 0 12 0z" fill="#0f9d58"/>
<path d="M0 0L12 0A12 12 0 0 0 0 -12z" fill="#f4b400"/>
<path d="M0 -5.5h10.8A12 12 0 0 1 12 0l-5.5 9.7z" fill="#f4b400"/>
<circle r="5.6" fill="#fff"/><circle r="4.4" fill="#4285f4"/>
</g>
<circle cx="760" cy="753.7" r="6.4" fill="#1e3b26" stroke="#43291f" stroke-width="0.6"/>
<circle cx="760" cy="753.7" r="4.6" fill="none" stroke="#fff" stroke-width="0.8"/>
<circle cx="760" cy="752.2" r="1.6" fill="none" stroke="#fff" stroke-width="0.8"/>
<path d="M757.2 756.4c.8-1.4 1.8-2 2.8-2s2 .6 2.8 2" fill="none" stroke="#fff" stroke-width="0.8"/>
<!-- edge -->
<circle cx="803.1" cy="747.8" r="12.1" fill="url(#edge1)"/>
<path d="M791 748.4A12.1 12.1 0 0 0 813.4 754.2C810.6 756.8 806.2 757.4 802.6 756C798.6 754.4 797.4 750.2 798.8 747.4C800 745.2 802.6 744.4 805 745C800.4 741.8 794.6 742.6 791 748.4z" fill="#1c8ae0"/>
<path d="M798.8 747.4C797.4 750.2 798.6 754.4 802.6 756C806.2 757.4 810.6 756.8 813.4 754.2C810.6 753.6 806.6 753.2 803.8 751.8C801.4 750.6 800.8 748.6 801.8 746.8z" fill="#135cae"/>
<path d="M804.6 750.6C807.6 752.4 810.8 752.8 814 752.2" fill="none" stroke="#452c29" stroke-width="1.2"/>
<circle cx="802.8" cy="748.2" r="2.7" fill="#452c29"/>
<!-- acrobat -->
<rect x="841.2" y="737.3" width="21.1" height="20.5" rx="2.5" fill="#b30b00"/>
<path d="M845.4 753.8c1.6-2.8 3.6-7.4 5.2-11.8c.6-1.8.2-3.4-.6-3.4c-.8 0-1.2 1.6-.6 3.6c1.4 4.4 4.4 8.2 7.6 8.6c1.8.2 2.2-1.2.2-1.6c-3.4-.6-8.4.8-11.8 4.6z" fill="none" stroke="#fff" stroke-width="1.3"/>
<!-- tray -->
<path d="M1123.5 751l5.7-5.7l5.7 5.7" fill="none" stroke="#fff" stroke-width="1.3"/>
<path d="M1145.5 742.4l15-2.2v13.6l-15 .6z" fill="none" stroke="#fff" stroke-width="1.2"/>
<path d="M1150.6 748.6a3 3 0 0 1 5-2.6M1155.4 748.4a3 3 0 0 1-5 2.6" fill="none" stroke="#fff" stroke-width="1"/>
<circle cx="1157.8" cy="752.7" r="3" fill="#f7931e"/>
<g fill="none" stroke="#fff" stroke-width="1.1">
<path d="M1172.4 754.4a12 12 0 0 1 12-12"/>
<path d="M1175.6 754.4a8.8 8.8 0 0 1 8.8-8.8"/>
<path d="M1178.8 754.4a5.6 5.6 0 0 1 5.6-5.6"/>
</g>
<circle cx="1183.6" cy="753.6" r="1.3" fill="#fff"/>
<rect x="1194.6" y="744" width="13" height="8.6" fill="none" stroke="#fff" stroke-width="1.2"/>
<rect x="1207.6" y="746.6" width="1.6" height="3.4" fill="#fff"/>
<rect x="1196.6" y="746" width="4.6" height="4.6" fill="#fff"/>
<!-- notification -->
<path d="M1325.5 740.5h15.6v12h-15.6z" fill="#fff"/>
<path d="M1328 743.5h10.6M1328 746.3h10.6M1328 749.1h7" stroke="#24383a" stroke-width="1"/>
<circle cx="1340.5" cy="755.3" r="9.8" fill="#333" stroke="#777" stroke-width="0.8"/>
<text x="1340.6" y="759.8" font-family="Liberation Sans" font-size="12.5" fill="#fff" stroke="#fff" stroke-width="0.3" text-anchor="middle">20</text>
<path d="M1361.5 728v40" stroke="#5e7070" stroke-width="1"/>
</svg>
<div class="t" style="left:1221.5px;top:741px;font-size:11.6px;color:#fff;transform:scaleX(0.8);transform-origin:0 0">ESP</div>
<div class="t" style="left:1268px;top:732px;font-size:11.8px;color:#fff;transform:scaleX(0.9);transform-origin:0 0">12:07</div>
<div class="t" style="left:1256px;top:750px;font-size:11.8px;color:#fff;transform:scaleX(0.95);transform-origin:0 0">14/8/2025</div>
</body></html>
